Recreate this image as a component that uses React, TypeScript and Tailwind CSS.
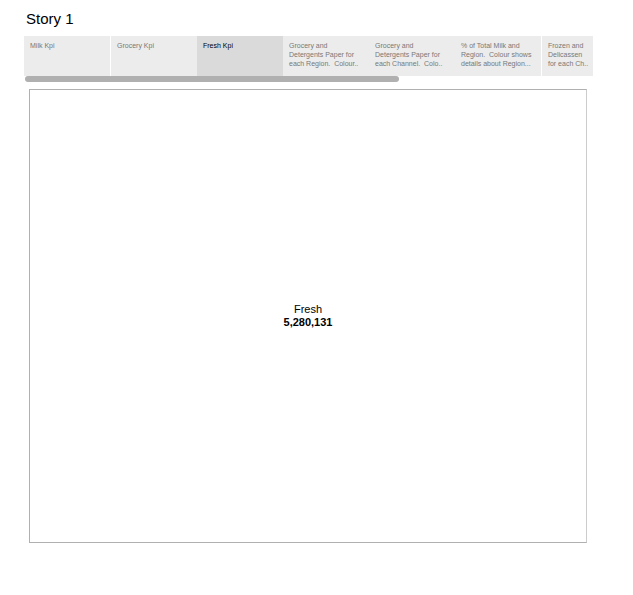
type StoryPoint = { caption: string[]; className: string };

const points: StoryPoint[] = [
  { caption: ["Milk Kpi"], className: "w-[86px] bg-[#ececec] text-[#787878]" },
  { caption: ["Grocery Kpi"], className: "w-[87px] border-l border-white bg-[#ececec] text-[#787878]" },
  { caption: ["Fresh Kpi"], className: "w-[86px] bg-[#dadada] text-black" },
  {
    caption: ["Grocery and", "Detergents Paper for", "each Region.  Colour.."],
    className: "w-[86px] bg-[#ececec] text-[#787878]",
  },
  {
    caption: ["Grocery and", "Detergents Paper for", "each Channel.  Colo.."],
    className: "w-[86px] bg-[#ececec] text-[#787878]",
  },
  {
    caption: ["% of Total Milk and", "Region.  Colour shows", "details about Region..."],
    className: "w-[86px] bg-[#ececec] text-[#787878]",
  },
  {
    caption: ["Frozen and", "Delicassen", "for each Ch.."],
    className: "w-[87px] border-l border-white bg-[#ececec] text-[#787878]",
  },
];

export default function App() {
  return (
    <main className="bg-white pt-[9px] pr-10 pb-12 pl-6 font-['Liberation_Sans',Arial,sans-serif] text-black">
      <h1 className="px-[2px] text-[15px] leading-5">Story 1</h1>

      <nav aria-label="Story points" className="mt-[7px] overflow-hidden">
        <div className="flex h-10">
          {points.map((point, index) => (
            <button
              key={index}
              type="button"
              aria-current={index === 2 ? "step" : undefined}
              className={`flex h-10 shrink-0 flex-col items-start px-[6px] pt-[5px] text-left text-[7px] leading-[9px] whitespace-pre ${point.className}`}
            >
              {point.caption.map((line) => (
                <span key={line}>{line}</span>
              ))}
            </button>
          ))}
        </div>
        <div className="h-[6px] px-px">
          <div className="h-full w-[66%] rounded-full bg-[#b0b0b0]" />
        </div>
      </nav>

      <section className="mt-[7px] mr-[6px] ml-[5px] flex h-[454px] flex-col items-center justify-center border border-[#b0b0b0] border-r-[#cccccc] text-[11px] leading-[13px]">
        <p>Fresh</p>
        <p className="font-bold">5,280,131</p>
      </section>
    </main>
  );
}
